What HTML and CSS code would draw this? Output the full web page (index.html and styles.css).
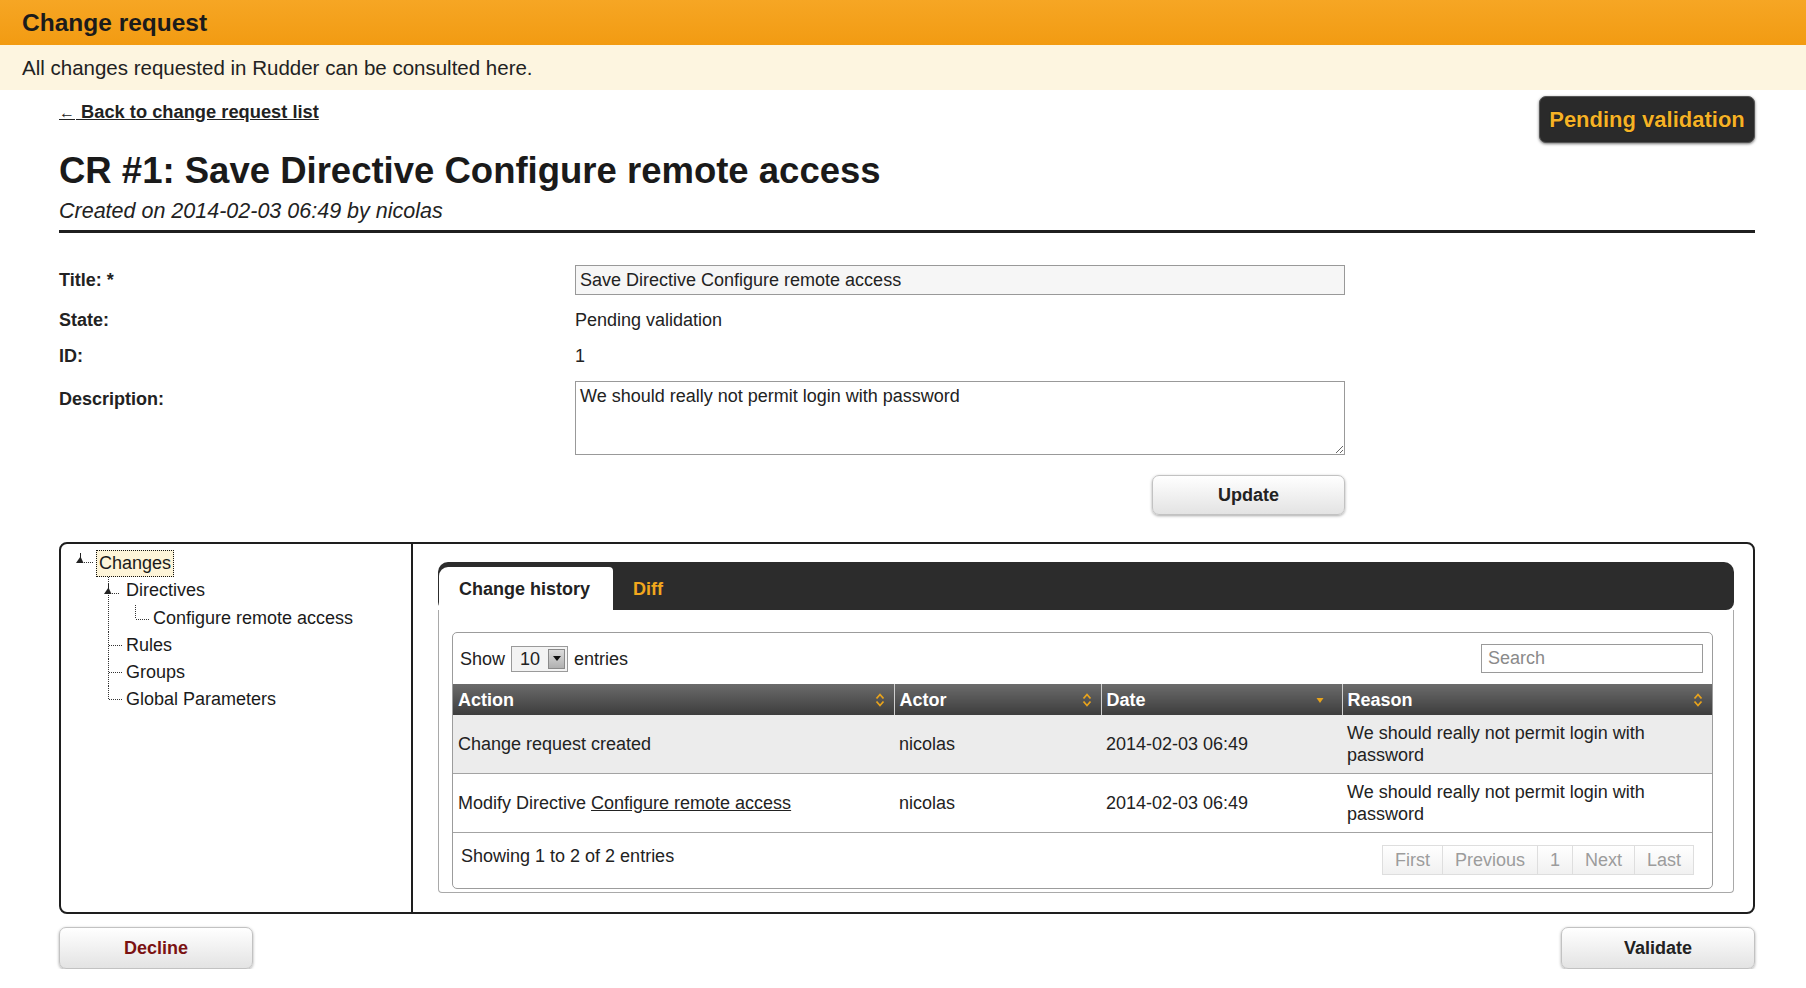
FILE: index.html
```html
<!DOCTYPE html>
<html lang="en">
<head>
<meta charset="utf-8">
<title>Change request</title>
<link rel="stylesheet" href="styles.css">
</head>
<body>
<div class="page-title">Change request</div>
<div class="page-intro">All changes requested in Rudder can be consulted here.</div>

<main class="content">
  <header class="cr-head">
    <div class="cr-head-main">
      <div class="back-row"><a class="back-link" href="#"><span class="back-arrow">&larr;</span> Back to change request list</a></div>
      <h1 class="cr-title">CR #1: Save Directive Configure remote access</h1>
      <div class="cr-meta">Created on 2014-02-03 06:49 by nicolas</div>
    </div>
    <div class="status-badge">Pending validation</div>
  </header>

  <form class="cr-form">
    <div class="form-grid">
      <label class="form-label" for="cr-title">Title: *</label>
      <input id="cr-title" class="text-input" type="text" value="Save Directive Configure remote access">
      <div class="form-label">State:</div>
      <div class="form-value">Pending validation</div>
      <div class="form-label">ID:</div>
      <div class="form-value">1</div>
      <label class="form-label label-top" for="cr-desc">Description:</label>
      <textarea id="cr-desc" class="text-area">We should really not permit login with password</textarea>
    </div>
    <div class="form-actions"><button class="btn" type="button">Update</button></div>
  </form>

  <section class="changes-panel">
    <nav class="tree">
      <ul class="tree-root">
        <li class="tree-node">
          <div class="tree-row">
            <svg class="tree-ins" viewBox="0 0 24 27" shape-rendering="crispEdges"><line x1="8.5" y1="3" x2="8.5" y2="8" stroke="#222"/><polygon points="4,13 8.5,6.5 11.5,13" fill="#222" shape-rendering="auto"/><line x1="12" y1="12.5" x2="21" y2="12.5" stroke="#333" stroke-dasharray="1 1"/></svg>
            <a class="tree-label is-focused" href="#">Changes</a>
          </div>
          <ul class="tree-children">
            <li class="tree-node has-line">
              <div class="tree-row">
                <svg class="tree-ins" viewBox="0 0 24 27" shape-rendering="crispEdges"><line x1="9.5" y1="7" x2="9.5" y2="12" stroke="#222"/><polygon points="5,17 9.5,10.5 12.5,17" fill="#222" shape-rendering="auto"/><line x1="13" y1="16.5" x2="21" y2="16.5" stroke="#333" stroke-dasharray="1 1"/></svg>
                <a class="tree-label" href="#">Directives</a>
              </div>
              <ul class="tree-children">
                <li class="tree-node is-last">
                  <div class="tree-row">
                    <svg class="tree-ins" viewBox="0 0 24 27" shape-rendering="crispEdges"><line x1="10" y1="14.5" x2="24" y2="14.5" stroke="#333" stroke-dasharray="1 1"/></svg>
                    <a class="tree-label" href="#">Configure remote access</a>
                  </div>
                </li>
              </ul>
            </li>
            <li class="tree-node has-line">
              <div class="tree-row">
                <svg class="tree-ins" viewBox="0 0 24 27" shape-rendering="crispEdges"><line x1="10" y1="13.5" x2="23" y2="13.5" stroke="#333" stroke-dasharray="1 1"/></svg>
                <a class="tree-label" href="#">Rules</a>
              </div>
            </li>
            <li class="tree-node has-line">
              <div class="tree-row">
                <svg class="tree-ins" viewBox="0 0 24 27" shape-rendering="crispEdges"><line x1="10" y1="13.5" x2="23" y2="13.5" stroke="#333" stroke-dasharray="1 1"/></svg>
                <a class="tree-label" href="#">Groups</a>
              </div>
            </li>
            <li class="tree-node is-last">
              <div class="tree-row">
                <svg class="tree-ins" viewBox="0 0 24 27" shape-rendering="crispEdges"><line x1="10" y1="13.5" x2="23" y2="13.5" stroke="#333" stroke-dasharray="1 1"/></svg>
                <a class="tree-label" href="#">Global Parameters</a>
              </div>
            </li>
          </ul>
        </li>
      </ul>
    </nav>

    <div class="tabs-pane">
      <div class="tab-bar">
        <a class="tab tab-active" href="#">Change history</a>
        <a class="tab tab-link" href="#">Diff</a>
      </div>
      <div class="tab-panel">
        <div class="dt-wrapper">
          <div class="dt-toolbar">
            <div class="dt-length">
              <span>Show</span>
              <span class="select"><span>10</span><span class="select-arrow"><svg width="8" height="5" viewBox="0 0 8 5"><polygon points="0,0 8,0 4,5" fill="#111"/></svg></span></span>
              <span>entries</span>
            </div>
            <input class="dt-search" type="text" placeholder="Search">
          </div>
          <table class="dt-table">
            <colgroup>
              <col class="col-action">
              <col class="col-actor">
              <col class="col-date">
              <col class="col-reason">
            </colgroup>
            <thead>
              <tr>
                <th><div class="th-inner"><span>Action</span><svg class="sort-icon" width="10" height="16" viewBox="0 0 10 16"><path d="M1.5 6.5 L5 2.5 L8.5 6.5 M1.5 9.5 L5 13.5 L8.5 9.5" fill="none" stroke="#e8a31c" stroke-width="1.8"/></svg></div></th>
                <th><div class="th-inner"><span>Actor</span><svg class="sort-icon" width="10" height="16" viewBox="0 0 10 16"><path d="M1.5 6.5 L5 2.5 L8.5 6.5 M1.5 9.5 L5 13.5 L8.5 9.5" fill="none" stroke="#e8a31c" stroke-width="1.8"/></svg></div></th>
                <th><div class="th-inner th-sorted"><span>Date</span><svg class="sort-icon" width="10" height="16" viewBox="0 0 10 16"><polygon points="1.5,6 8.5,6 5,11" fill="#e8a31c"/></svg></div></th>
                <th><div class="th-inner"><span>Reason</span><svg class="sort-icon" width="10" height="16" viewBox="0 0 10 16"><path d="M1.5 6.5 L5 2.5 L8.5 6.5 M1.5 9.5 L5 13.5 L8.5 9.5" fill="none" stroke="#e8a31c" stroke-width="1.8"/></svg></div></th>
              </tr>
            </thead>
            <tbody>
              <tr class="row-odd">
                <td>Change request created</td>
                <td>nicolas</td>
                <td>2014-02-03 06:49</td>
                <td>We should really not permit login with password</td>
              </tr>
              <tr class="row-even">
                <td>Modify Directive <a class="cell-link" href="#">Configure remote access</a></td>
                <td>nicolas</td>
                <td>2014-02-03 06:49</td>
                <td>We should really not permit login with password</td>
              </tr>
            </tbody>
          </table>
          <div class="dt-footer">
            <div class="dt-info">Showing 1 to 2 of 2 entries</div>
            <div class="pager">
              <span class="pager-btn">First</span>
              <span class="pager-btn">Previous</span>
              <span class="pager-btn">1</span>
              <span class="pager-btn">Next</span>
              <span class="pager-btn">Last</span>
            </div>
          </div>
        </div>
      </div>
    </div>
  </section>

  <div class="bottom-actions">
    <button class="btn btn-lg btn-decline" type="button">Decline</button>
    <button class="btn btn-lg" type="button">Validate</button>
  </div>
</main>
</body>
</html>
```

FILE: styles.css
```css
* { box-sizing: border-box; }
html, body { margin: 0; padding: 0; }
body {
  font-family: "Liberation Sans", Arial, Helvetica, sans-serif;
  font-size: 18px;
  line-height: 22px;
  color: #222;
  background: #fff;
}

/* top bars */
.page-title {
  height: 45px;
  background: linear-gradient(#f6a624, #f29b12);
  padding-left: 22px;
  display: flex;
  align-items: center;
  font-weight: bold;
  font-size: 24.5px;
  color: #1b1b1b;
}
.page-intro {
  height: 45px;
  background: #fdf5e0;
  padding-left: 22px;
  display: flex;
  align-items: center;
  font-size: 20.5px;
  color: #222;
}

.content {
  width: 1696px;
  margin-left: 59px;
}

/* heading block */
.cr-head {
  display: flex;
  justify-content: space-between;
  align-items: flex-start;
  border-bottom: 3px solid #1f1f1f;
  padding-bottom: 9px;
}
.back-row {
  padding-top: 11px;
  font-weight: bold;
  font-size: 18.3px;
  line-height: 22px;
}
.back-link { color: #222; text-decoration: underline; }
.back-arrow { font-size: 16px; padding: 0 1px 0 0; }
.cr-title {
  margin: 28px 0 11px;
  font-size: 36.5px;
  line-height: 38px;
  font-weight: bold;
  color: #1a1a1a;
}
.cr-meta {
  font-style: italic;
  font-size: 21.5px;
  line-height: 20px;
}
.status-badge {
  margin-top: 6px;
  width: 216px;
  height: 47px;
  display: flex;
  align-items: center;
  justify-content: center;
  background: #2a2a2a;
  border: 1px solid #555;
  color: #f5b227;
  font-weight: bold;
  font-size: 22px;
  border-radius: 7px;
  box-shadow: 0 1px 3px rgba(0, 0, 0, 0.55);
  text-shadow: 0 0 1px #000;
}

/* form */
.cr-form { padding-top: 32px; }
.form-grid {
  display: grid;
  grid-template-columns: 516px 770px;
  row-gap: 14px;
  align-items: center;
}
.form-label { font-weight: bold; }
.label-top { align-self: start; padding-top: 7px; }
.text-input {
  width: 770px;
  height: 30px;
  border: 1px solid #999;
  background: #f6f6f6;
  font: 18px "Liberation Sans", Arial, sans-serif;
  color: #222;
  padding: 0 4px;
}
.text-area {
  display: block;
  width: 770px;
  height: 74px;
  border: 1px solid #999;
  background: #fff;
  font: 18px/22px "Liberation Sans", Arial, sans-serif;
  color: #222;
  padding: 3px 4px;
  resize: both;
}
.form-actions {
  width: 1286px;
  display: flex;
  justify-content: flex-end;
  margin-top: 20px;
}
.btn {
  width: 193px;
  height: 40px;
  border: 1px solid #c2c2c2;
  border-radius: 7px;
  background: linear-gradient(#ffffff, #e3e3e3);
  box-shadow: 0 1px 3px rgba(0, 0, 0, 0.35);
  font: bold 18px "Liberation Sans", Arial, sans-serif;
  color: #222;
  padding: 0;
}
.btn-lg { width: 194px; height: 42px; }
.btn-decline { color: #7b1212; }

/* panel */
.changes-panel {
  margin-top: 27px;
  height: 372px;
  border: 2px solid #1e1e1e;
  border-radius: 8px;
  display: flex;
}

/* tree */
.tree {
  width: 352px;
  flex: none;
  border-right: 2px solid #1e1e1e;
  padding: 6px 0 0 11px;
}
.tree ul { list-style: none; margin: 0; padding: 0; }
.tree-children { margin-left: 27px !important; }
.tree-row { display: flex; align-items: flex-start; height: 27.3px; }
.tree-ins { width: 24px; height: 27px; flex: none; display: block; }
.tree-label {
  border: 1px solid transparent;
  padding: 0 2px;
  line-height: 25px;
  color: #1a1a1a;
  text-decoration: none;
  white-space: nowrap;
}
.tree-label.is-focused {
  border: 1px dotted #111;
  background: #fdf4d8;
}
.tree-node.has-line,
.tree-node.is-last {
  background-image: repeating-linear-gradient(to bottom, #333 0 1px, transparent 1px 2px);
  background-repeat: no-repeat;
  background-position: 9px 0;
}
.tree-node.has-line { background-size: 1px 100%; }
.tree-node.is-last { background-size: 1px 14px; }

/* tabs */
.tabs-pane {
  flex: 1;
  padding: 18px 19px 19px 25px;
  display: flex;
  flex-direction: column;
}
.tab-bar {
  height: 48px;
  flex: none;
  background: #2c2c2c;
  border-radius: 10px 10px 8px 8px;
  display: flex;
  align-items: flex-end;
  padding-left: 1px;
}
.tab {
  height: 43px;
  display: flex;
  align-items: center;
  font-weight: bold;
  font-size: 18px;
  text-decoration: none;
}
.tab-active {
  background: #fff;
  color: #222;
  padding: 0 23px 0 20px;
  border-radius: 9px 4px 0 0;
}
.tab-link { color: #f2a71d; margin-left: 20px; }
.tab-panel {
  flex: 1;
  border: 1px solid #a9a9a9;
  border-top: none;
  border-radius: 0 0 4px 4px;
  padding: 22px 20px 3px 13px;
}

/* data table */
.dt-wrapper {
  border: 1px solid #9c9c9c;
  border-radius: 5px;
  height: 257px;
  display: flex;
  flex-direction: column;
}
.dt-toolbar {
  height: 51px;
  flex: none;
  display: flex;
  align-items: center;
  justify-content: space-between;
  padding: 0 9px 0 7px;
}
.dt-length { display: flex; align-items: center; gap: 6px; }
.select {
  display: inline-flex;
  align-items: center;
  justify-content: space-between;
  width: 57px;
  height: 26px;
  border: 1px solid #9a9a9a;
  background: #f3f3f3;
  padding: 0 2px 0 8px;
}
.select-arrow {
  width: 17px;
  height: 20px;
  border: 1px solid #8a8a8a;
  background: linear-gradient(#dcdcdc, #b0b0b0);
  display: flex;
  align-items: center;
  justify-content: center;
}
.dt-search {
  width: 222px;
  height: 29px;
  border: 1px solid #9a9a9a;
  padding: 0 6px;
  font: 18px "Liberation Sans", Arial, sans-serif;
  color: #222;
}
.dt-search::placeholder { color: #8a8a8a; }

.dt-table {
  width: 100%;
  border-collapse: collapse;
  table-layout: fixed;
}
.col-action { width: 441px; }
.col-actor { width: 207px; }
.col-date { width: 241px; }
.col-reason { width: 370px; }
.dt-table th {
  height: 31px;
  padding: 0 9px 0 5px;
  background: linear-gradient(#6b6b6b, #3d3d3d);
  color: #fff;
  font-weight: bold;
  text-align: left;
  border-left: 1px solid #cfcfcf;
}
.dt-table th:first-child { border-left: none; }
.th-inner {
  display: flex;
  align-items: center;
  justify-content: space-between;
}
.th-sorted { padding-right: 8px; }
.sort-icon { display: block; flex: none; }
.dt-table td {
  padding: 7px 5px;
  vertical-align: middle;
  border-bottom: 1px solid #a3a3a3;
  color: #222;
}
.row-odd td { background: #ececec; }
.row-even td { background: #fff; }
.cell-link { color: #222; text-decoration: underline; }

.dt-footer {
  flex: 1;
  display: flex;
  justify-content: space-between;
  align-items: flex-start;
  padding: 12px 18px 0 8px;
}
.pager { display: flex; height: 30px; }
.pager-btn {
  display: flex;
  align-items: center;
  padding: 0 12px;
  border: 1px solid #dedede;
  margin-left: -1px;
  background: linear-gradient(#ffffff, #f1f1f1);
  color: #9c9c9c;
}

/* bottom buttons */
.bottom-actions {
  display: flex;
  justify-content: space-between;
  margin-top: 13px;
}
```
